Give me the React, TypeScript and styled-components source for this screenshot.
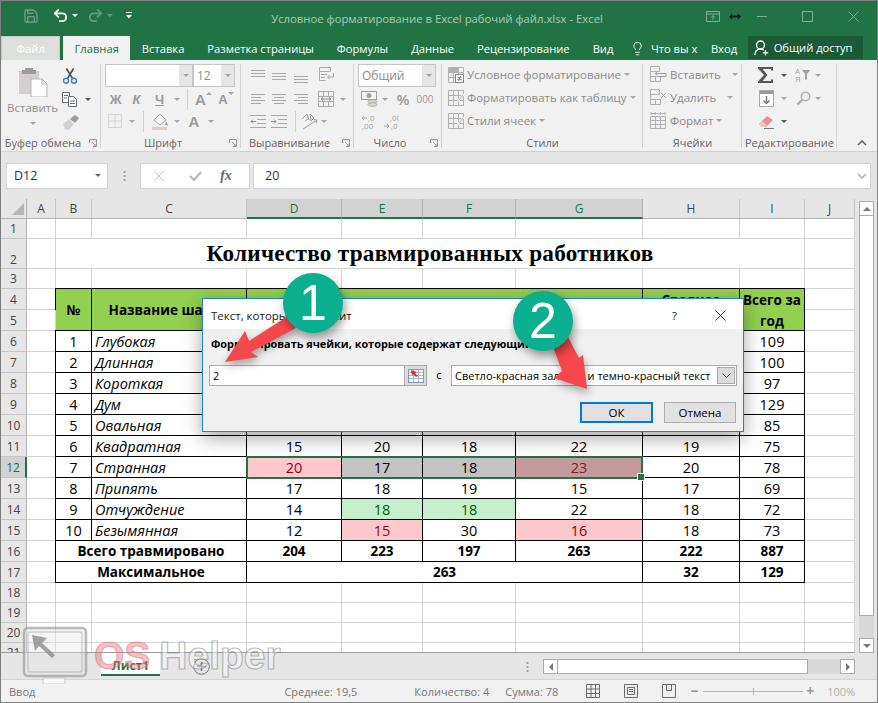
import React from 'react'
import styled, { createGlobalStyle } from 'styled-components'
import { Lightbulb, Redo2, Save, Undo2 } from 'lucide-react'

const GREEN = '#217346'
const UI_FONT = '"Open Sans", "Noto Sans", sans-serif'

const GlobalStyle = createGlobalStyle`
  html, body {
    margin: 0;
    padding: 0;
    background: #fff;
  }
  * {
    box-sizing: border-box;
  }
`

const Window = styled.div`
  position: relative;
  display: flex;
  flex-direction: column;
  width: 878px;
  height: 703px;
  overflow: hidden;
  font-family: ${UI_FONT};
  background: #e6e6e6;
  border: 1px solid #7f7f7f;
`

/* title bar */

const TitleBar = styled.div`
  display: flex;
  flex: 0 0 35px;
  align-items: center;
  color: #a9cbb8;
  font-size: 11.3px;
  background: ${GREEN};
`

const QuickAccess = styled.div`
  display: flex;
  flex: 1 1 0;
  align-items: center;
  padding-left: 22px;
  padding-bottom: 6px;
`

const Title = styled.div`
  margin-right: 8px;
  white-space: nowrap;
`

const WindowControls = styled.div`
  display: flex;
  flex: 1 1 0;
  align-items: center;
  justify-content: flex-end;
  padding-right: 18px;
  padding-bottom: 4px;
`

const Slot = styled.span<{ $w: number; $ml?: number }>`
  display: inline-flex;
  flex: 0 0 ${p => p.$w}px;
  align-items: center;
  justify-content: center;
  width: ${p => p.$w}px;
  margin-left: ${p => p.$ml || 0}px;
`

const Caret = styled.span<{ $color?: string; $ml?: number }>`
  display: inline-block;
  flex: none;
  width: 0;
  height: 0;
  margin-left: ${p => p.$ml || 0}px;
  border-top: 3px solid ${p => p.$color || '#a6a6a6'};
  border-right: 3.5px solid transparent;
  border-left: 3.5px solid transparent;
`

/* tabs */

const TabStrip = styled.div`
  display: flex;
  flex: 0 0 24px;
  align-items: stretch;
  color: #fff;
  font-size: 11.2px;
  background: ${GREEN};
`

const FileTab = styled.div`
  display: flex;
  flex: 0 0 59px;
  align-items: center;
  justify-content: center;
  margin-right: 3px;
  color: #fff;
  background: #dcdfdc;
  border: 1px solid #c8cbc8;
  border-bottom: 0;
`

const Tab = styled.div<{ $active?: boolean }>`
  display: flex;
  flex: none;
  align-items: center;
  padding: 0 11.5px;
  white-space: nowrap;
  color: ${p => (p.$active ? GREEN : '#fff')};
  background: ${p => (p.$active ? '#f1f1f1' : 'transparent')};
`

const HelpTab = styled(Tab)`
  gap: 6px;
  padding: 0 2px 0 5px;
`

const ShareButton = styled.div`
  display: flex;
  flex: 0 0 115px;
  gap: 5px;
  align-items: center;
  height: 23px;
  margin-left: -1px;
  padding-left: 6px;
  white-space: nowrap;
  background: #1a5a37;
`

/* ribbon */

const Ribbon = styled.div`
  display: flex;
  flex: 0 0 92px;
  min-height: 0;
  color: #8c8c8c;
  font-size: 11.5px;
  background: #f1f1f1;
  border-bottom: 1px solid #d2d2d2;
`

const Group = styled.div<{ $w: number }>`
  position: relative;
  display: flex;
  flex: 0 0 ${p => p.$w}px;
  flex-direction: column;
  width: ${p => p.$w}px;
  padding-top: 3px;

  &::after {
    content: '';
    position: absolute;
    top: 4px;
    right: 0;
    bottom: 3px;
    width: 1px;
    background: #d4d4d4;
  }
`

const GroupBody = styled.div<{ $pl?: number }>`
  display: flex;
  flex: 0 0 70px;
  flex-direction: column;
  padding-left: ${p => p.$pl || 0}px;
`

const GroupLabel = styled.div<{ $launcher?: boolean }>`
  padding-top: 2px;
  padding-right: ${p => (p.$launcher ? 16 : 0)}px;
  color: #666;
  font-size: 11px;
  line-height: 16px;
  text-align: center;
  white-space: nowrap;
`

const Launcher = styled.svg`
  position: absolute;
  right: 4px;
  bottom: 4px;
  width: 8px;
  height: 8px;
`

const Collapse = styled.div`
  display: flex;
  flex: 1;
  align-items: flex-end;
  justify-content: center;
  padding: 0 0 5px 10px;
`

const ToolRow = styled.div<{ $h?: number }>`
  display: flex;
  flex: 0 0 ${p => p.$h || 22}px;
  align-items: center;
  height: ${p => p.$h || 22}px;
`

const ClipboardBody = styled.div`
  display: flex;
  flex: 1;
`

const PasteColumn = styled.div`
  display: flex;
  flex: 0 0 59px;
  flex-direction: column;
  align-items: center;
  padding-top: 3px;
  color: #909090;
  line-height: 16px;
`

const PasteLabel = styled.div`
  margin-top: 3px;
  margin-bottom: 6px;
`

const SmallColumn = styled.div`
  display: flex;
  flex-direction: column;
`

const Combo = styled.div<{ $w: number }>`
  display: flex;
  flex: 0 0 ${p => p.$w}px;
  align-items: stretch;
  justify-content: space-between;
  width: ${p => p.$w}px;
  height: 23px;
  padding-left: 3px;
  color: #8c8c8c;
  font-size: 12px;
  line-height: 21px;
  background: #fff;
  border: 1px solid #c6c6c6;
`

const ComboArrow = styled.span`
  display: flex;
  flex: 0 0 13px;
  align-items: center;
  justify-content: center;
  background: #e6e6e6;
`

const FontLetter = styled.span<{ $italic?: boolean; $line?: boolean; $size?: number }>`
  color: #9a9a9a;
  font-family: 'Liberation Sans', sans-serif;
  font-size: ${p => p.$size || 13}px;
  font-weight: bold;
  font-style: ${p => (p.$italic ? 'italic' : 'normal')};
  text-decoration: ${p => (p.$line ? 'underline' : 'none')};
`

const GrowCaret = styled(Caret)<{ $up?: boolean }>`
  transform: ${p => (p.$up ? 'rotate(180deg) translateY(6px)' : 'translateY(-6px)')};
`

const ToolSep = styled.span<{ $h?: number }>`
  display: block;
  width: 1px;
  height: ${p => p.$h || 21}px;
  background: #d0d0d0;
`

const NumberText = styled.span<{ $size?: number }>`
  color: #9a9a9a;
  font-size: ${p => p.$size || 10}px;
  font-weight: ${p => (p.$size ? 600 : 400)};
`

const LabelTool = styled.div`
  display: flex;
  flex: 0 0 23px;
  gap: 3px;
  align-items: center;
  white-space: nowrap;
`

/* formula bar */

const FormulaBar = styled.div`
  display: flex;
  flex: 0 0 47px;
  align-items: center;
  padding: 0 6px 0 5px;
  background: #e6e6e6;
`

const FormulaBox = styled.div<{ $w?: number; $ml?: number }>`
  display: flex;
  flex: ${p => (p.$w ? `0 0 ${p.$w}px` : '1')};
  align-items: center;
  height: 26px;
  margin-left: ${p => p.$ml || 0}px;
  font-size: 12.5px;
  color: #333;
  background: #fff;
  border: 1px solid #d4d4d4;
`

const FormulaDots = styled.div`
  width: 3px;
  height: 12px;
  margin: 0 14px 0 15px;
  background: radial-gradient(circle, #a0a0a0 1px, transparent 1.2px) 0 0 / 3px 4px;
`

const NameText = styled.span`
  flex: 1;
  padding-left: 7px;
`

const FormulaText = styled(NameText)`
  padding-left: 11px;
`

const NameCaret = styled(Caret)`
  margin-right: 6px;
`

const FxMark = styled.span`
  width: 26px;
  color: #666;
  font-family: 'Liberation Serif', serif;
  font-size: 14px;
  font-style: italic;
  font-weight: bold;
  text-align: center;
`

const ExpandMark = styled.svg`
  width: 10px;
  height: 6px;
  margin-right: 3px;
`

/* sheet */

const SheetRow = styled.div`
  display: flex;
  flex: 0 0 454px;
`

const Sheet = styled.div`
  position: relative;
  display: grid;
  flex: 0 0 854px;
  grid-template-columns: 26px 29px 36px 155px 95px 81px 93px 127px 97px 65px 50px;
  grid-template-rows: 20px 20px 30px 20px repeat(14, 21px) repeat(4, 20px);
  height: 454px;
  overflow: hidden;
  color: #000;
  font-size: 14.5px;
  background: #fff;
  border-bottom: 1px solid #9c9c9c;
`

const Corner = styled.div`
  background: #e6e6e6;
  border-right: 1px solid #b4b4b4;
  border-bottom: 1px solid #b4b4b4;

  &::after {
    content: '';
    display: block;
    width: 0;
    height: 0;
    margin: 4px 0 0 11px;
    border-bottom: 12px solid #b5b5b5;
    border-left: 12px solid transparent;
  }
`

const ColHeader = styled.div<{ $selected?: boolean }>`
  display: flex;
  align-items: center;
  justify-content: center;
  color: ${p => (p.$selected ? GREEN : '#444')};
  font-size: 12px;
  background: ${p => (p.$selected ? '#d2d2d2' : '#e6e6e6')};
  border-right: 1px solid ${p => (p.$selected ? '#b0b0b0' : '#c6c6c6')};
  border-bottom: ${p => (p.$selected ? `2px solid ${GREEN}` : '1px solid #b4b4b4')};
`

const RowHeader = styled.div<{ $selected?: boolean; $low?: boolean }>`
  display: flex;
  align-items: ${p => (p.$low ? 'flex-end' : 'center')};
  justify-content: center;
  color: ${p => (p.$selected ? GREEN : '#444')};
  font-size: 12px;
  background: ${p => (p.$selected ? '#d2d2d2' : '#e6e6e6')};
  border-right: ${p => (p.$selected ? `2px solid ${GREEN}` : '1px solid #b4b4b4')};
  border-bottom: 1px solid #c6c6c6;
`

const TONES: Record<string, { bg: string; fg: string }> = {
  pink: { bg: '#ffc7ce', fg: '#9c0006' },
  green: { bg: '#c6efce', fg: '#006100' },
  gray: { bg: '#c3c3c3', fg: '#000' },
  rose: { bg: '#c49a9f', fg: '#8c1a1f' },
  head: { bg: '#92d050', fg: '#000' },
}

const Cell = styled.div<{
  $black?: boolean
  $bold?: boolean
  $left?: boolean
  $italic?: boolean
  $span?: number
  $rows?: number
  $tone?: string
}>`
  display: flex;
  grid-column: span ${p => p.$span || 1};
  grid-row: span ${p => p.$rows || 1};
  align-items: center;
  justify-content: ${p => (p.$left ? 'flex-start' : 'center')};
  padding-left: ${p => (p.$left ? 3 : 0)}px;
  color: ${p => (p.$tone ? TONES[p.$tone].fg : '#000')};
  font-size: ${p => (p.$bold ? 13.5 : 14.5)}px;
  font-weight: ${p => (p.$bold ? 700 : 400)};
  font-style: ${p => (p.$italic ? 'italic' : 'normal')};
  line-height: 21px;
  text-align: center;
  background: ${p => (p.$tone ? TONES[p.$tone].bg : '#fff')};
  border-right: 1px solid ${p => (p.$black ? '#000' : '#d4d4d4')};
  border-bottom: 1px solid ${p => (p.$black ? '#000' : '#d4d4d4')};
  box-shadow: ${p => (p.$black ? '-1px 0 0 #000, 0 -1px 0 #000, -1px -1px 0 #000' : 'none')};
`

const HeadCell = styled(Cell)`
  padding-top: 2px;
`

const SheetTitle = styled(Cell)`
  font-family: 'Liberation Serif', serif;
  font-size: 23.2px;
  font-weight: 700;
  letter-spacing: 0.25px;
`

const Selection = styled.div`
  position: absolute;
  top: -1px;
  right: 0;
  bottom: -1px;
  left: -1px;
  grid-column: 5 / 9;
  grid-row: 13 / 14;
  border: 2px solid ${GREEN};
  pointer-events: none;

  &::after {
    content: '';
    position: absolute;
    right: -4px;
    bottom: -4px;
    width: 6px;
    height: 6px;
    background: ${GREEN};
    border: 1px solid #fff;
  }
`

const VScroll = styled.div`
  display: flex;
  flex: 1;
  flex-direction: column;
  padding: 2px 3px 0 4px;
  background: #e6e6e6;
`

const ScrollButton = styled.div<{ $w?: number }>`
  display: flex;
  flex: 0 0 ${p => p.$w || 15}px;
  align-items: center;
  justify-content: center;
  background: #fff;
  border: 1px solid #ababab;
`

const VThumb = styled.div`
  flex: 0 0 400px;
  background: #fff;
  border: 1px solid #ababab;
  border-top: 0;
`

const VTrack = styled.div`
  flex: 1;
  background: #d9d9d9;
`

const ArrowUp = styled.span`
  border-right: 4px solid transparent;
  border-bottom: 4px solid #7a7a7a;
  border-left: 4px solid transparent;
`

const ArrowDown = styled.span`
  border-top: 4px solid #7a7a7a;
  border-right: 4px solid transparent;
  border-left: 4px solid transparent;
`

const ArrowLeft = styled.span`
  border-top: 4px solid transparent;
  border-right: 4px solid #7a7a7a;
  border-bottom: 4px solid transparent;
`

const ArrowRight = styled.span`
  border-top: 4px solid transparent;
  border-bottom: 4px solid transparent;
  border-left: 4px solid #7a7a7a;
`

/* sheet tabs */

const SheetTabs = styled.div`
  display: flex;
  flex: 0 0 27px;
  align-items: flex-start;
  background: #e6e6e6;
  border-bottom: 1px solid #d4d4d4;
`

const SheetTab = styled.div`
  display: flex;
  flex: 0 0 59px;
  align-items: center;
  justify-content: center;
  height: 23px;
  margin-left: 100px;
  padding-top: 3px;
  color: ${GREEN};
  font-size: 12px;
  font-weight: 700;
  background: #fff;
  border-bottom: 2px solid ${GREEN};
`

const AddSheet = styled.svg`
  flex: none;
  width: 17px;
  height: 17px;
  margin: 5px 0 0 33px;
`

const TabDots = styled(FormulaDots)`
  flex: none;
  margin: 8px 0 0 316px;
`

const HScroll = styled.div`
  display: flex;
  flex: 0 0 312px;
  height: 15px;
  margin: 6px 0 0 14px;
`

const HThumb = styled.div`
  flex: 0 0 250px;
  background: #fff;
  border: 1px solid #ababab;
  border-left: 0;
`

/* status bar */

const StatusBar = styled.div`
  display: flex;
  flex: 1;
  align-items: center;
  color: #777;
  font-size: 11px;
  background: #f1f1f1;
`

const StatusText = styled.span<{ $ml: number; $dim?: boolean }>`
  flex: none;
  margin-left: ${p => p.$ml}px;
  color: ${p => (p.$dim ? '#b0b0b0' : '#777')};
  white-space: nowrap;
`

const ViewIcon = styled.svg<{ $ml: number }>`
  flex: none;
  width: 14px;
  height: 14px;
  margin-left: ${p => p.$ml}px;
`

const ZoomSlider = styled.div`
  position: relative;
  flex: 0 0 100px;
  height: 1px;
  margin-left: 5px;
  background: #b5b5b5;

  &::after {
    content: '';
    position: absolute;
    top: -3px;
    left: 50%;
    width: 1px;
    height: 7px;
    background: #b5b5b5;
  }
`

const ZoomSign = styled.span<{ $ml: number }>`
  flex: 0 0 8px;
  margin-left: ${p => p.$ml}px;
  color: #9a9a9a;
  font-size: 14px;
  font-weight: 700;
  line-height: 12px;
  text-align: center;
`

/* dialog */

const Dialog = styled.div`
  position: absolute;
  top: 297px;
  left: 201px;
  display: flex;
  flex-direction: column;
  width: 542px;
  height: 134px;
  color: #000;
  font-size: 11.5px;
  background: #f0f0f0;
  border: 1px solid #1883d7;
  box-shadow: 0 6px 18px rgba(0, 0, 0, 0.35);
`

const DialogHeader = styled.div`
  display: flex;
  flex: 0 0 30px;
  align-items: center;
  justify-content: space-between;
  padding: 2px 17px 0 8px;
  color: #222;
  background: #fff;
`

const HeaderButtons = styled.div`
  display: flex;
  gap: 38px;
  align-items: center;
`

const DialogBody = styled.div`
  display: flex;
  flex: 1;
  flex-direction: column;
  padding: 7px 6px 0 6px;
`

const DialogPrompt = styled.div`
  margin-left: 2px;
  font-size: 10.9px;
  font-weight: 700;
  line-height: 16px;
  white-space: nowrap;
`

const DialogFields = styled.div`
  display: flex;
  align-items: stretch;
  height: 21px;
  margin-top: 13px;
  font-size: 11px;
`

const TextInput = styled.div`
  flex: 0 0 196px;
  padding-left: 3px;
  line-height: 19px;
  background: #fff;
  border: 1px solid #ababab;
`

const RefButton = styled.div`
  display: flex;
  flex: 0 0 22px;
  align-items: center;
  justify-content: center;
  background: #dcdcdc;
  border: 1px solid #ababab;
  border-left: 0;
`

const WithLabel = styled.span`
  flex: 0 0 24px;
  line-height: 20px;
  text-align: center;
`

const SelectBox = styled.div`
  display: flex;
  flex: 0 0 286px;
  justify-content: space-between;
  padding-left: 3px;
  line-height: 19px;
  white-space: nowrap;
  background: #fff;
  border: 1px solid #ababab;
`

const SelectArrow = styled.span`
  display: flex;
  flex: 0 0 18px;
  align-items: center;
  justify-content: center;
  margin: 1px;
  background: #dcdcdc;
  border: 1px solid #ababab;
`

const DialogButtons = styled.div`
  display: flex;
  gap: 11px;
  justify-content: flex-end;
  margin-top: 16px;
  padding-right: 1px;
`

const DialogButton = styled.div<{ $primary?: boolean }>`
  width: ${p => (p.$primary ? 73 : 72)}px;
  height: 21px;
  line-height: ${p => (p.$primary ? 17 : 19)}px;
  text-align: center;
  background: #e1e1e1;
  border: ${p => (p.$primary ? '2px solid #0078d7' : '1px solid #adadad')};
`

/* annotations and watermark */

const Bubble = styled.div<{ $x: number; $y: number }>`
  position: absolute;
  top: ${p => p.$y}px;
  left: ${p => p.$x}px;
  display: flex;
  align-items: center;
  justify-content: center;
  width: 60px;
  height: 60px;
  color: #fff;
  font-family: 'Liberation Sans', sans-serif;
  font-size: 50px;
  line-height: 1;
  background: #0aaf8f;
  border-radius: 50%;
  box-shadow: 2px 5px 10px rgba(0, 0, 0, 0.4);
`

const ArrowLayer = styled.svg`
  position: absolute;
  top: -1px;
  left: -1px;
  width: 878px;
  height: 703px;
  pointer-events: none;
  filter: drop-shadow(1px 4px 4px rgba(0, 0, 0, 0.35));
`

const Watermark = styled.div`
  position: absolute;
  top: 625px;
  left: 21px;
  display: flex;
  align-items: flex-start;
  pointer-events: none;
`

const MarkWord = styled.span<{ $brand?: boolean; $ml: number }>`
  margin: 9px 0 0 ${p => p.$ml}px;
  color: ${p => (p.$brand ? 'rgba(240, 110, 125, 0.45)' : 'rgba(255, 255, 255, 0.45)')};
  font-family: 'Liberation Sans', sans-serif;
  font-size: 39px;
  font-weight: 700;
  line-height: 42px;
  -webkit-text-stroke: 1.2px ${p => (p.$brand ? 'rgba(210, 120, 130, 0.5)' : 'rgba(120, 120, 120, 0.5)')};
`

/* small ribbon drawings */

const Lines: React.FC<{ rows: [number, number, number][]; color?: string }> = ({ rows, color = '#a8a8a8' }) => (
  <svg width="16" height="16" viewBox="0 0 16 16">
    {rows.map(([x1, x2, y]) => (
      <line key={y} x1={x1} x2={x2} y1={y + 0.5} y2={y + 0.5} stroke={color} />
    ))}
  </svg>
)

const Outline: React.FC<{ w?: number; h?: number; children: React.ReactNode }> = ({ w = 16, h = 16, children }) => (
  <svg width={w} height={h} viewBox={`0 0 ${w} ${h}`} fill="none" stroke="#ababab">
    {children}
  </svg>
)

const ShareIcon = () => (
  <svg width="15" height="16" viewBox="0 0 15 16" fill="none" stroke="#fff" strokeWidth="1.300">
    <circle cx="6.500" cy="5" r="4" />
    <path d="M.8 15c.4-3.500 2.400-6 5.700-6 1.300 0 2.300.4 3.100 1" />
    <path d="M11.500 10v5.500M8.800 12.800h5.500" />
  </svg>
)

const ScissorsIcon = () => (
  <svg width="16" height="16" viewBox="0 0 16 16" fill="none">
    <path d="M5.500 10.500L11.500.5M10.500 10.500L4.500.5" stroke="#4a4a4a" strokeWidth="1.500" />
    <circle cx="4" cy="12.800" r="2.500" stroke="#4f7fb8" strokeWidth="1.400" />
    <circle cx="12" cy="12.800" r="2.500" stroke="#4f7fb8" strokeWidth="1.400" />
  </svg>
)

const PasteIcon = () => (
  <svg width="30" height="31" viewBox="0 0 30 31">
    <path d="M1 5h20v23H1z" fill="#d4cfcf" />
    <path d="M7 2h8v2h3v4H4V4h3z" fill="#a09c9c" />
    <path d="M13 13h11l5 5v13H13z" fill="#fdfdfd" stroke="#b5b5b5" />
    <path d="M24 13v5h5" fill="none" stroke="#b5b5b5" />
  </svg>
)

const CopyIcon = () => (
  <svg width="16" height="15" viewBox="0 0 16 15" fill="#fff" stroke="#6b6b6b">
    <path d="M.5.5h7v10h-7z" />
    <path d="M6.5 4.5h5l3 3v7h-8z" />
    <path d="M2 3.5h4M2 6h3M8 9h5M8 11.500h5" stroke="#4a6f9c" />
  </svg>
)

const BrushIcon = () => (
  <svg width="17" height="15" viewBox="0 0 17 15">
    <path d="M1 9l6-5 5 5-5 6-4-1z" fill="#d0d0d0" />
    <path d="M8 4l5-4 4 3-4 5z" fill="#9c9c9c" />
  </svg>
)

const GridIcon = () => (
  <svg width="15" height="15" viewBox="0 0 15 15" fill="none" stroke="#bdbdbd" strokeDasharray="1 1">
    <path d="M.5.5h13v13H.5zM7 .5v13M.5 7h13" />
  </svg>
)

const FillIcon = () => (
  <svg width="17" height="18" viewBox="0 0 17 18" fill="none">
    <path d="M2 7l6-6 6 6-6 5z" fill="#f8f8f8" stroke="#a4a4a4" />
    <path d="M14 8l2 4-3 0z" fill="#a4a4a4" />
    <rect y="14" width="15" height="3" fill="#e9c7ce" />
  </svg>
)

const WrapIcon = () => (
  <Outline w={17} h={17}>
    <path d="M1.500.5h11v4h-11zM1.500 4.500v9h6M3 7.500h6M3 10.500h4" />
    <path d="M15.500 6v4h-6M11.500 8l-2 2 2 2" />
  </Outline>
)

const MergeIcon = () => (
  <Outline w={17} h={16}>
    <path d="M.5.5h15v15H.5zM.5 5.500h15M.5 10.500h15M5.500.5v5M10.500.5v5M5.500 10.500v5M10.500 10.500v5" />
    <path d="M3 8h10M5 6.500L3 8l2 1.500M11 6.500L13 8l-2 1.500" stroke="#8c8c8c" />
  </Outline>
)

const IndentIcon: React.FC<{ flip?: boolean }> = ({ flip }) => (
  <svg width="16" height="13" viewBox="0 0 16 13" fill="none" stroke="#a8a8a8">
    <path d="M0 .5h16M7 4.500h9M7 8.500h9M0 12.500h16" />
    <path d={flip ? 'M0 6.500h5M3 4.500l2 2-2 2' : 'M1 6.500h5M3 4.500l-2 2 2 2'} stroke="#8f8f8f" />
  </svg>
)

const OrientIcon = () => (
  <svg width="18" height="17" viewBox="0 0 18 17" fill="none" stroke="#a0a0a0">
    <path d="M1 6l5-5 2 6M4 8l3-2M9 1l4 4-3 3zM2 16l14-9M13 6.500l3 .5-1 3" />
  </svg>
)

const MoneyIcon = () => (
  <svg width="17" height="16" viewBox="0 0 17 16">
    <rect x=".5" y=".5" width="15" height="8" fill="#f3f3f3" stroke="#a0a0a0" />
    <circle cx="8" cy="4.500" r="2.500" fill="#a0a0a0" />
    <ellipse cx="11.500" cy="10.500" rx="4.500" ry="1.800" fill="#d9d9c9" stroke="#b0b0a0" />
    <ellipse cx="11.500" cy="13.500" rx="4.500" ry="1.800" fill="#d9d9c9" stroke="#b0b0a0" />
  </svg>
)

const DecimalIcon: React.FC<{ less?: boolean }> = ({ less }) => (
  <svg width="16" height="16" viewBox="0 0 16 16" fill="none" stroke="#a8a8a8">
    <path d={less ? 'M1 4h5M3 2L1 4l2 2' : 'M1 12h5M4 10l2 2-2 2'} />
    <text x="7" y="7" fontSize="8" fill="#a0a0a0" stroke="none" fontFamily="'Open Sans'">
      {less ? ',0' : ',00'}
    </text>
    <text x={less ? 1 : 8} y="15" fontSize="8" fill="#a0a0a0" stroke="none" fontFamily="'Open Sans'">
      {less ? ',00' : ',0'}
    </text>
  </svg>
)

const TableStyleIcon: React.FC<{ kind: 'cond' | 'table' | 'cell' }> = ({ kind }) => (
  <svg width="16" height="16" viewBox="0 0 16 16" fill="none" stroke="#b0b0b0">
    <path d="M.5.500h15v15H.5zM.5 5.500h15M.5 10.500h15M5.500.5v15M10.500.5v15" />
    {kind === 'cond' && (
      <>
        <rect x="1" y="1" width="9" height="4" fill="#b0b0b0" stroke="none" />
        <rect x="7.500" y="7.500" width="8" height="8" fill="#f7f7f7" stroke="#8a8a8a" />
        <path d="M9.500 10.500h4M9.500 12.500h4M12.500 9l-2 5" stroke="#8a8a8a" />
      </>
    )}
    {kind !== 'cond' && <path d="M8 14l2-4 5-6 1 1-5 6z" fill="#a8a8a8" stroke="#f1f1f1" />}
  </svg>
)

const CellsIcon: React.FC<{ kind: 'insert' | 'remove' | 'format' }> = ({ kind }) => (
  <svg width="17" height="17" viewBox="0 0 17 17" fill="none" stroke="#b0b0b0">
    {kind === 'format' ? (
      <>
        <path d="M.5 4.500h15v12H.5zM.5 8.500h15M.5 12.500h15M5.500 4.500v12M10.500 4.500v12" />
        <path d="M1 1.500h14M1 0v3M15 0v3M5.500 0v3M10.500 0v3" />
      </>
    ) : (
      <>
        <path d="M.5.500h9v5h-9zM.5 5.500v10h5v-5h-5M5.500 10.500h5v5h-5z" />
        {kind === 'insert' ? (
          <path d="M5 7.500h11v3H9M7 6l-2 1.500L7 9" stroke="#9c9c9c" />
        ) : (
          <path d="M11 4l5 5M16 4l-5 5" stroke="#9c9c9c" />
        )}
      </>
    )}
  </svg>
)

const SigmaIcon = () => (
  <svg width="16" height="16" viewBox="0 0 16 16">
    <path d="M0 0h15v3.500h-2V2H4.500l5 6-5 6H13v-1.500h2V16H0v-1.500L6 8 0 1.500z" fill="#555" />
  </svg>
)

const SortIcon = () => (
  <svg width="16" height="16" viewBox="0 0 16 16">
    <text x="0" y="7" fontSize="7.500" fill="#a8a8a8" fontFamily="'Liberation Sans'">
      А
    </text>
    <text x="0" y="15" fontSize="7.500" fill="#a8a8a8" fontFamily="'Liberation Sans'">
      Я
    </text>
    <path d="M7 3h8l-3 4v5l-2 1V7z" fill="#a0a0a0" />
  </svg>
)

const FillDownIcon = () => (
  <svg width="15" height="17" viewBox="0 0 15 17" fill="#fff" stroke="#a8a8a8">
    <path d="M.5.500h14v16H.5z" />
    <path d="M1 1h13v3H1z" fill="#9a9a9a" stroke="none" />
    <path d="M7.500 6v8M4.500 10.500l3 3 3-3" fill="none" stroke="#777" strokeWidth="1.400" />
  </svg>
)

const FindIcon = () => (
  <svg width="15" height="15" viewBox="0 0 15 15" fill="none" stroke="#b0b0b0" strokeWidth="1.600">
    <circle cx="9.500" cy="5.500" r="4.200" />
    <path d="M6.500 8.500l-5 5" strokeWidth="2.400" />
  </svg>
)

const EraserIcon = () => (
  <svg width="15" height="15" viewBox="0 0 15 15">
    <path d="M0 10l8-8 6 4-7 7H3z" fill="#e8909a" />
    <path d="M0 10l3-3 5 4-2 2H3z" fill="#f2c4ca" />
    <path d="M5 14.500h10" stroke="#777" />
  </svg>
)

const RefIcon = () => (
  <svg width="16" height="14" viewBox="0 0 16 14">
    <rect x=".5" y=".5" width="15" height="13" fill="#fff" stroke="#7f9db9" />
    <path d="M1 3.500h14M1 6.500h14M1 9.500h14M5.500 1v12M10.500 1v12" stroke="#9db8d2" />
    <path d="M3 1l6 2-2 1 3 3-2 1-3-3-1 2z" fill="#d9322b" />
  </svg>
)

const LauncherMark = () => (
  <Launcher viewBox="0 0 8 8" fill="none" stroke="#9a9a9a">
    <path d="M.5 4V.5H7.500V7.500H4M3 3l4 4M5 7h2V5" />
  </Launcher>
)

/* sheet data */

const COLUMNS = ['A', 'B', 'C', 'D', 'E', 'F', 'G', 'H', 'I', 'J']
const SELECTED_COLUMNS = ['D', 'E', 'F', 'G']

type DataRow = {
  row: number
  no: string
  name: string
  values: (string | [string, string])[]
}

const DATA_ROWS: DataRow[] = [
  { row: 6, no: '1', name: 'Глубокая', values: ['', '', '', '', '', '109'] },
  { row: 7, no: '2', name: 'Длинная', values: ['', '', '', '', '', '100'] },
  { row: 8, no: '3', name: 'Короткая', values: ['', '', '', '', '', '97'] },
  { row: 9, no: '4', name: 'Дум', values: ['', '', '', '', '', '129'] },
  { row: 10, no: '5', name: 'Овальная', values: ['', '', '', '', '', '85'] },
  { row: 11, no: '6', name: 'Квадратная', values: ['15', '20', '18', '22', '19', '75'] },
  {
    row: 12,
    no: '7',
    name: 'Странная',
    values: [['20', 'pink'], ['17', 'gray'], ['18', 'gray'], ['23', 'rose'], '20', '78'],
  },
  { row: 13, no: '8', name: 'Припять', values: ['17', '18', '19', '15', '17', '69'] },
  { row: 14, no: '9', name: 'Отчуждение', values: ['14', ['18', 'green'], ['18', 'green'], '22', '18', '72'] },
  { row: 15, no: '10', name: 'Безымянная', values: ['12', ['15', 'pink'], '30', ['16', 'pink'], '18', '73'] },
]

const Blank = () => <Cell />

const RowStart: React.FC<{ row: number; low?: boolean }> = ({ row, low }) => (
  <>
    <RowHeader $selected={row === 12} $low={low}>
      {row}
    </RowHeader>
    <Blank />
  </>
)

const EmptyRow: React.FC<{ row: number }> = ({ row }) => (
  <>
    <RowStart row={row} />
    {COLUMNS.slice(1).map(col => (
      <Blank key={col} />
    ))}
  </>
)

const SheetGrid = () => (
  <Sheet>
    <Corner />
    {COLUMNS.map(col => (
      <ColHeader key={col} $selected={SELECTED_COLUMNS.includes(col)}>
        {col}
      </ColHeader>
    ))}

    <EmptyRow row={1} />

    <RowStart row={2} low />
    <SheetTitle $span={8}>Количество травмированных работников</SheetTitle>
    <Blank />

    <EmptyRow row={3} />

    <RowStart row={4} />
    <HeadCell $black $bold $rows={2} $tone="head">
      №
    </HeadCell>
    <HeadCell $black $bold $rows={2} $tone="head">
      Название шахты
    </HeadCell>
    <HeadCell $black $bold $span={4} $rows={2} $tone="head" />
    <HeadCell $black $bold $rows={2} $tone="head">
      Среднее
      <br />
      за год
    </HeadCell>
    <HeadCell $black $bold $rows={2} $tone="head">
      Всего за год
    </HeadCell>
    <Blank />

    <RowStart row={5} />
    <Blank />

    {DATA_ROWS.map(item => (
      <React.Fragment key={item.row}>
        <RowStart row={item.row} />
        <Cell $black>{item.no}</Cell>
        <Cell $black $italic $left>
          {item.name}
        </Cell>
        {item.values.map((value, i) => (
          <Cell key={i} $black $tone={Array.isArray(value) ? value[1] : undefined}>
            {Array.isArray(value) ? value[0] : value}
          </Cell>
        ))}
        <Blank />
      </React.Fragment>
    ))}

    <RowStart row={16} />
    <Cell $black $bold $span={2}>
      Всего травмировано
    </Cell>
    {['204', '223', '197', '263', '222', '887'].map((value, i) => (
      <Cell key={i} $black $bold>
        {value}
      </Cell>
    ))}
    <Blank />

    <RowStart row={17} />
    <Cell $black $bold $span={2}>
      Максимальное
    </Cell>
    <Cell $black $bold $span={4}>
      263
    </Cell>
    <Cell $black $bold>
      32
    </Cell>
    <Cell $black $bold>
      129
    </Cell>
    <Blank />

    {[18, 19, 20, 21].map(row => (
      <EmptyRow key={row} row={row} />
    ))}

    <Selection />
  </Sheet>
)

const RibbonBar = () => (
  <Ribbon>
    <Group $w={100}>
      <GroupBody>
        <ClipboardBody>
          <Slot $w={2} />
          <PasteColumn>
            <PasteIcon />
            <PasteLabel>Вставить</PasteLabel>
            <Caret />
          </PasteColumn>
          <SmallColumn>
            <ToolRow $h={25}>
              <ScissorsIcon />
            </ToolRow>
            <ToolRow $h={23}>
              <CopyIcon />
              <Caret $color="#555" $ml={7} />
            </ToolRow>
            <ToolRow $h={22}>
              <BrushIcon />
            </ToolRow>
          </SmallColumn>
        </ClipboardBody>
      </GroupBody>
      <GroupLabel $launcher>Буфер обмена</GroupLabel>
      <LauncherMark />
    </Group>

    <Group $w={140}>
      <GroupBody $pl={4}>
        <ToolRow $h={25}>
          <Combo $w={88}>
            <span />
            <ComboArrow>
              <Caret />
            </ComboArrow>
          </Combo>
          <Combo $w={42}>
            12
            <ComboArrow>
              <Caret />
            </ComboArrow>
          </Combo>
        </ToolRow>
        <ToolRow>
          <Slot $w={21}>
            <FontLetter>Ж</FontLetter>
          </Slot>
          <Slot $w={21}>
            <FontLetter $italic>К</FontLetter>
          </Slot>
          <Slot $w={25}>
            <FontLetter $line>Ч</FontLetter>
          </Slot>
          <Slot $w={9}>
            <Caret />
          </Slot>
          <Slot $w={12}>
            <ToolSep />
          </Slot>
          <Slot $w={21}>
            <FontLetter $size={15}>A</FontLetter>
            <GrowCaret $up />
          </Slot>
          <Slot $w={24}>
            <FontLetter $size={13}>A</FontLetter>
            <GrowCaret />
          </Slot>
        </ToolRow>
        <ToolRow $h={23}>
          <Slot $w={21}>
            <GridIcon />
          </Slot>
          <Slot $w={12}>
            <Caret />
          </Slot>
          <Slot $w={10}>
            <ToolSep />
          </Slot>
          <Slot $w={24}>
            <FillIcon />
          </Slot>
          <Slot $w={9}>
            <Caret />
          </Slot>
          <Slot $w={26}>
            <FontLetter $size={15}>A</FontLetter>
          </Slot>
          <Slot $w={7}>
            <Caret />
          </Slot>
        </ToolRow>
      </GroupBody>
      <GroupLabel $launcher>Шрифт</GroupLabel>
      <LauncherMark />
    </Group>

    <Group $w={113}>
      <GroupBody $pl={7}>
        <ToolRow $h={25}>
          <Slot $w={20}>
            <Lines rows={[[1, 15, 2], [1, 15, 5], [1, 15, 8]]} />
          </Slot>
          <Slot $w={22}>
            <Lines rows={[[1, 15, 5], [1, 15, 8], [1, 15, 11]]} />
          </Slot>
          <Slot $w={22}>
            <Lines rows={[[1, 15, 8], [1, 15, 11], [1, 15, 14]]} />
          </Slot>
          <Slot $w={28}>
            <WrapIcon />
          </Slot>
        </ToolRow>
        <ToolRow>
          <Slot $w={20}>
            <Lines rows={[[1, 15, 3], [1, 11, 6], [1, 15, 9], [1, 11, 12]]} />
          </Slot>
          <Slot $w={22}>
            <Lines rows={[[1, 15, 3], [3, 13, 6], [1, 15, 9], [3, 13, 12]]} />
          </Slot>
          <Slot $w={22}>
            <Lines rows={[[1, 15, 3], [5, 15, 6], [1, 15, 9], [5, 15, 12]]} />
          </Slot>
          <Slot $w={28}>
            <MergeIcon />
          </Slot>
          <Slot $w={6}>
            <Caret />
          </Slot>
        </ToolRow>
        <ToolRow $h={23}>
          <Slot $w={20}>
            <IndentIcon />
          </Slot>
          <Slot $w={22}>
            <IndentIcon flip />
          </Slot>
          <Slot $w={10}>
            <ToolSep />
          </Slot>
          <Slot $w={20}>
            <OrientIcon />
          </Slot>
          <Slot $w={8}>
            <Caret />
          </Slot>
        </ToolRow>
      </GroupBody>
      <GroupLabel $launcher>Выравнивание</GroupLabel>
      <LauncherMark />
    </Group>

    <Group $w={88}>
      <GroupBody $pl={4}>
        <ToolRow $h={25}>
          <Combo $w={78}>
            Общий
            <ComboArrow>
              <Caret />
            </ComboArrow>
          </Combo>
        </ToolRow>
        <ToolRow>
          <Slot $w={22}>
            <MoneyIcon />
          </Slot>
          <Slot $w={10}>
            <Caret />
          </Slot>
          <Slot $w={26}>
            <NumberText $size={15}>%</NumberText>
          </Slot>
          <Slot $w={18}>
            <NumberText>000</NumberText>
          </Slot>
        </ToolRow>
        <ToolRow $h={23}>
          <Slot $w={22}>
            <DecimalIcon less />
          </Slot>
          <Slot $w={22}>
            <DecimalIcon />
          </Slot>
        </ToolRow>
      </GroupBody>
      <GroupLabel $launcher>Число</GroupLabel>
      <LauncherMark />
    </Group>

    <Group $w={201}>
      <GroupBody $pl={6}>
        <LabelTool>
          <TableStyleIcon kind="cond" />
          Условное форматирование
          <Caret />
        </LabelTool>
        <LabelTool>
          <TableStyleIcon kind="table" />
          Форматировать как таблицу
          <Caret />
        </LabelTool>
        <LabelTool>
          <TableStyleIcon kind="cell" />
          Стили ячеек
          <Caret />
        </LabelTool>
      </GroupBody>
      <GroupLabel>Стили</GroupLabel>
    </Group>

    <Group $w={99}>
      <GroupBody $pl={7}>
        <LabelTool>
          <CellsIcon kind="insert" />
          Вставить
          <Caret $ml={8} />
        </LabelTool>
        <LabelTool>
          <CellsIcon kind="remove" />
          Удалить
          <Caret $ml={8} />
        </LabelTool>
        <LabelTool>
          <CellsIcon kind="format" />
          Формат
          <Caret />
        </LabelTool>
      </GroupBody>
      <GroupLabel>Ячейки</GroupLabel>
    </Group>

    <Group $w={95}>
      <GroupBody $pl={10}>
        <ToolRow $h={24}>
          <Slot $w={28}>
            <SigmaIcon />
          </Slot>
          <Slot $w={8}>
            <Caret $color="#555" />
          </Slot>
          <Slot $w={22} $ml={4}>
            <SortIcon />
          </Slot>
          <Slot $w={7}>
            <Caret />
          </Slot>
        </ToolRow>
        <ToolRow>
          <Slot $w={28}>
            <FillDownIcon />
          </Slot>
          <Slot $w={8}>
            <Caret />
          </Slot>
          <Slot $w={22} $ml={4}>
            <FindIcon />
          </Slot>
          <Slot $w={7}>
            <Caret />
          </Slot>
        </ToolRow>
        <ToolRow $h={24}>
          <Slot $w={28}>
            <EraserIcon />
          </Slot>
          <Slot $w={8}>
            <Caret $color="#555" />
          </Slot>
        </ToolRow>
      </GroupBody>
      <GroupLabel>Редактирование</GroupLabel>
    </Group>

    <Collapse>
      <svg width="10" height="6" viewBox="0 0 10 6" fill="none" stroke="#666" strokeWidth="1.600">
        <path d="M1 5l4-4 4 4" />
      </svg>
    </Collapse>
  </Ribbon>
)

const CloseMark: React.FC<{ size: number; color: string }> = ({ size, color }) => (
  <svg width={size} height={size} viewBox="0 0 12 12" fill="none" stroke={color}>
    <path d="M.5.500l11 11M11.500.5l-11 11" />
  </svg>
)

export default function App() {
  return (
    <Window>
      <GlobalStyle />

      <TitleBar>
        <QuickAccess>
          <Save size={16} color="#6b9f85" />
          <Slot $w={13} />
          <Undo2 size={17} color="#fff" strokeWidth={2.6} />
          <Caret $color="#fff" $ml={3} />
          <Slot $w={9} />
          <Redo2 size={17} color="#5f9a7c" strokeWidth={2.6} />
          <Caret $color="#5f9a7c" $ml={3} />
          <Slot $w={13} />
          <svg width="7" height="7" viewBox="0 0 7 7" fill="#fff">
            <path d="M0 0h6v1H0zM0 3h6L3 6.500z" />
          </svg>
        </QuickAccess>
        <Title>Условное форматирование в Excel рабочий файл.xlsx - Excel</Title>
        <WindowControls>
          <svg width="14" height="11" viewBox="0 0 14 11" fill="none" stroke="#7fae96">
            <path d="M.5.500h13v10H.5zM.5 3h13M7 9V4.500M5 6.500l2-2 2 2" />
          </svg>
          <Slot $w={12} $ml={9}>
            <svg width="12" height="7" viewBox="0 0 12 7">
              <path d="M0 3.500L3 .5v2h6v-2l3 3-3 3v-2H3v2z" fill="#1b1b1b" />
            </svg>
          </Slot>
          <Slot $w={10} $ml={16}>
            <svg width="10" height="1" viewBox="0 0 10 1">
              <path d="M0 0h10v1H0z" fill="#7fae96" />
            </svg>
          </Slot>
          <Slot $w={11} $ml={35}>
            <svg width="11" height="11" viewBox="0 0 11 11" fill="none" stroke="#7fae96">
              <path d="M.5.500h10v10H.5z" />
            </svg>
          </Slot>
          <Slot $w={11} $ml={35}>
            <CloseMark size={11} color="#7fae96" />
          </Slot>
        </WindowControls>
      </TitleBar>

      <TabStrip>
        <FileTab>Файл</FileTab>
        <Tab $active>Главная</Tab>
        <Tab>Вставка</Tab>
        <Tab>Разметка страницы</Tab>
        <Tab>Формулы</Tab>
        <Tab>Данные</Tab>
        <Tab>Рецензирование</Tab>
        <Tab>Вид</Tab>
        <HelpTab>
          <Lightbulb size={15} color="#fff" strokeWidth={1.4} />
          Что вы х
        </HelpTab>
        <Tab>Вход</Tab>
        <ShareButton>
          <ShareIcon />
          Общий доступ
        </ShareButton>
      </TabStrip>

      <RibbonBar />

      <FormulaBar>
        <FormulaBox $w={102}>
          <NameText>D12</NameText>
          <NameCaret $color="#666" />
        </FormulaBox>
        <FormulaDots />
        <FormulaBox $w={110}>
          <Slot $w={36}>
            <CloseMark size={10} color="#b5b5b5" />
          </Slot>
          <Slot $w={36}>
            <svg width="13" height="10" viewBox="0 0 13 10" fill="none" stroke="#b5b5b5" strokeWidth="2">
              <path d="M1 5l4 4 7-8" />
            </svg>
          </Slot>
          <FxMark>fx</FxMark>
        </FormulaBox>
        <FormulaBox $ml={3}>
          <FormulaText>20</FormulaText>
          <ExpandMark viewBox="0 0 10 6" fill="none" stroke="#b5b5b5" strokeWidth="1.600">
            <path d="M1 1l4 4 4-4" />
          </ExpandMark>
        </FormulaBox>
      </FormulaBar>

      <SheetRow>
        <SheetGrid />
        <VScroll>
          <ScrollButton>
            <ArrowUp />
          </ScrollButton>
          <VThumb />
          <VTrack />
          <ScrollButton>
            <ArrowDown />
          </ScrollButton>
        </VScroll>
      </SheetRow>

      <SheetTabs>
        <SheetTab>Лист1</SheetTab>
        <AddSheet viewBox="0 0 17 17" fill="none" stroke="#7a7a7a">
          <circle cx="8.500" cy="8.500" r="7.800" />
          <path d="M8.500 4v9M4 8.500h9" strokeWidth="1.600" />
        </AddSheet>
        <TabDots />
        <HScroll>
          <ScrollButton>
            <ArrowLeft />
          </ScrollButton>
          <HThumb />
          <VTrack />
          <ScrollButton>
            <ArrowRight />
          </ScrollButton>
        </HScroll>
      </SheetTabs>

      <StatusBar>
        <StatusText $ml={8}>Ввод</StatusText>
        <StatusText $ml={249}>Среднее: 19,5</StatusText>
        <StatusText $ml={57}>Количество: 4</StatusText>
        <StatusText $ml={16}>Сумма: 78</StatusText>
        <ViewIcon $ml={28} viewBox="0 0 14 14" fill="none" stroke="#6a6a6a">
          <path d="M.5.500h13v13H.5zM.5 5h13M.5 9.500h13M5 .5v13M9.500.5v13" />
        </ViewIcon>
        <ViewIcon $ml={24} viewBox="0 0 14 14" fill="none" stroke="#6a6a6a">
          <path d="M.5.500h13v13H.5zM3.500 3.500h7v7h-7zM5 5.500h4M5 7.500h4" />
        </ViewIcon>
        <ViewIcon $ml={24} viewBox="0 0 14 14" fill="none" stroke="#6a6a6a">
          <path d="M.5.500h13v13H.5zM4.500.5v6h5v-6" />
        </ViewIcon>
        <ZoomSign $ml={14}>−</ZoomSign>
        <ZoomSlider />
        <ZoomSign $ml={3}>+</ZoomSign>
        <StatusText $ml={13} $dim>
          100%
        </StatusText>
      </StatusBar>

      <Dialog>
        <DialogHeader>
          Текст, который содержит
          <HeaderButtons>
            <span>?</span>
            <CloseMark size={11} color="#222" />
          </HeaderButtons>
        </DialogHeader>
        <DialogBody>
          <DialogPrompt>Форматировать ячейки, которые содержат следующий текст:</DialogPrompt>
          <DialogFields>
            <TextInput>2</TextInput>
            <RefButton>
              <RefIcon />
            </RefButton>
            <WithLabel>с</WithLabel>
            <SelectBox>
              Светло-красная заливка и темно-красный текст
              <SelectArrow>
                <svg width="9" height="5" viewBox="0 0 9 5" fill="none" stroke="#555">
                  <path d="M.5.500l4 4 4-4" />
                </svg>
              </SelectArrow>
            </SelectBox>
          </DialogFields>
          <DialogButtons>
            <DialogButton $primary>ОК</DialogButton>
            <DialogButton>Отмена</DialogButton>
          </DialogButtons>
        </DialogBody>
      </Dialog>

      <ArrowLayer viewBox="0 0 878 703">
        <path d="M288 316L296 328L251 352L258 357L225 362L245 331L249 341Z" fill="#f6474c" />
        <path d="M552 344L567 335L579 358L583 355L587 389L554 378L562 371Z" fill="#f6474c" />
      </ArrowLayer>
      <Bubble $x={282} $y={272}>1</Bubble>
      <Bubble $x={512} $y={290}>2</Bubble>

      <Watermark>
        <svg width="66" height="58" viewBox="0 0 66 58" fill="none">
          <rect x="2" y="2" width="62" height="48" rx="4" fill="rgba(230,230,230,0.45)" stroke="rgba(150,150,150,0.65)" strokeWidth="2.500" />
          <rect x="6" y="6" width="54" height="40" rx="2" stroke="rgba(170,170,170,0.5)" strokeWidth="1.500" />
          <path d="M10 9L25 12L20 17L33 29L30 32L17 20L13 25Z" fill="rgba(140,140,140,0.8)" />
          <rect x="21" y="52" width="22" height="6" rx="1" fill="rgba(255,255,255,0.7)" stroke="rgba(170,170,170,0.6)" />
        </svg>
        <MarkWord $brand $ml={6}>OS</MarkWord>
        <MarkWord $ml={9}>Helper</MarkWord>
      </Watermark>
    </Window>
  )
}
